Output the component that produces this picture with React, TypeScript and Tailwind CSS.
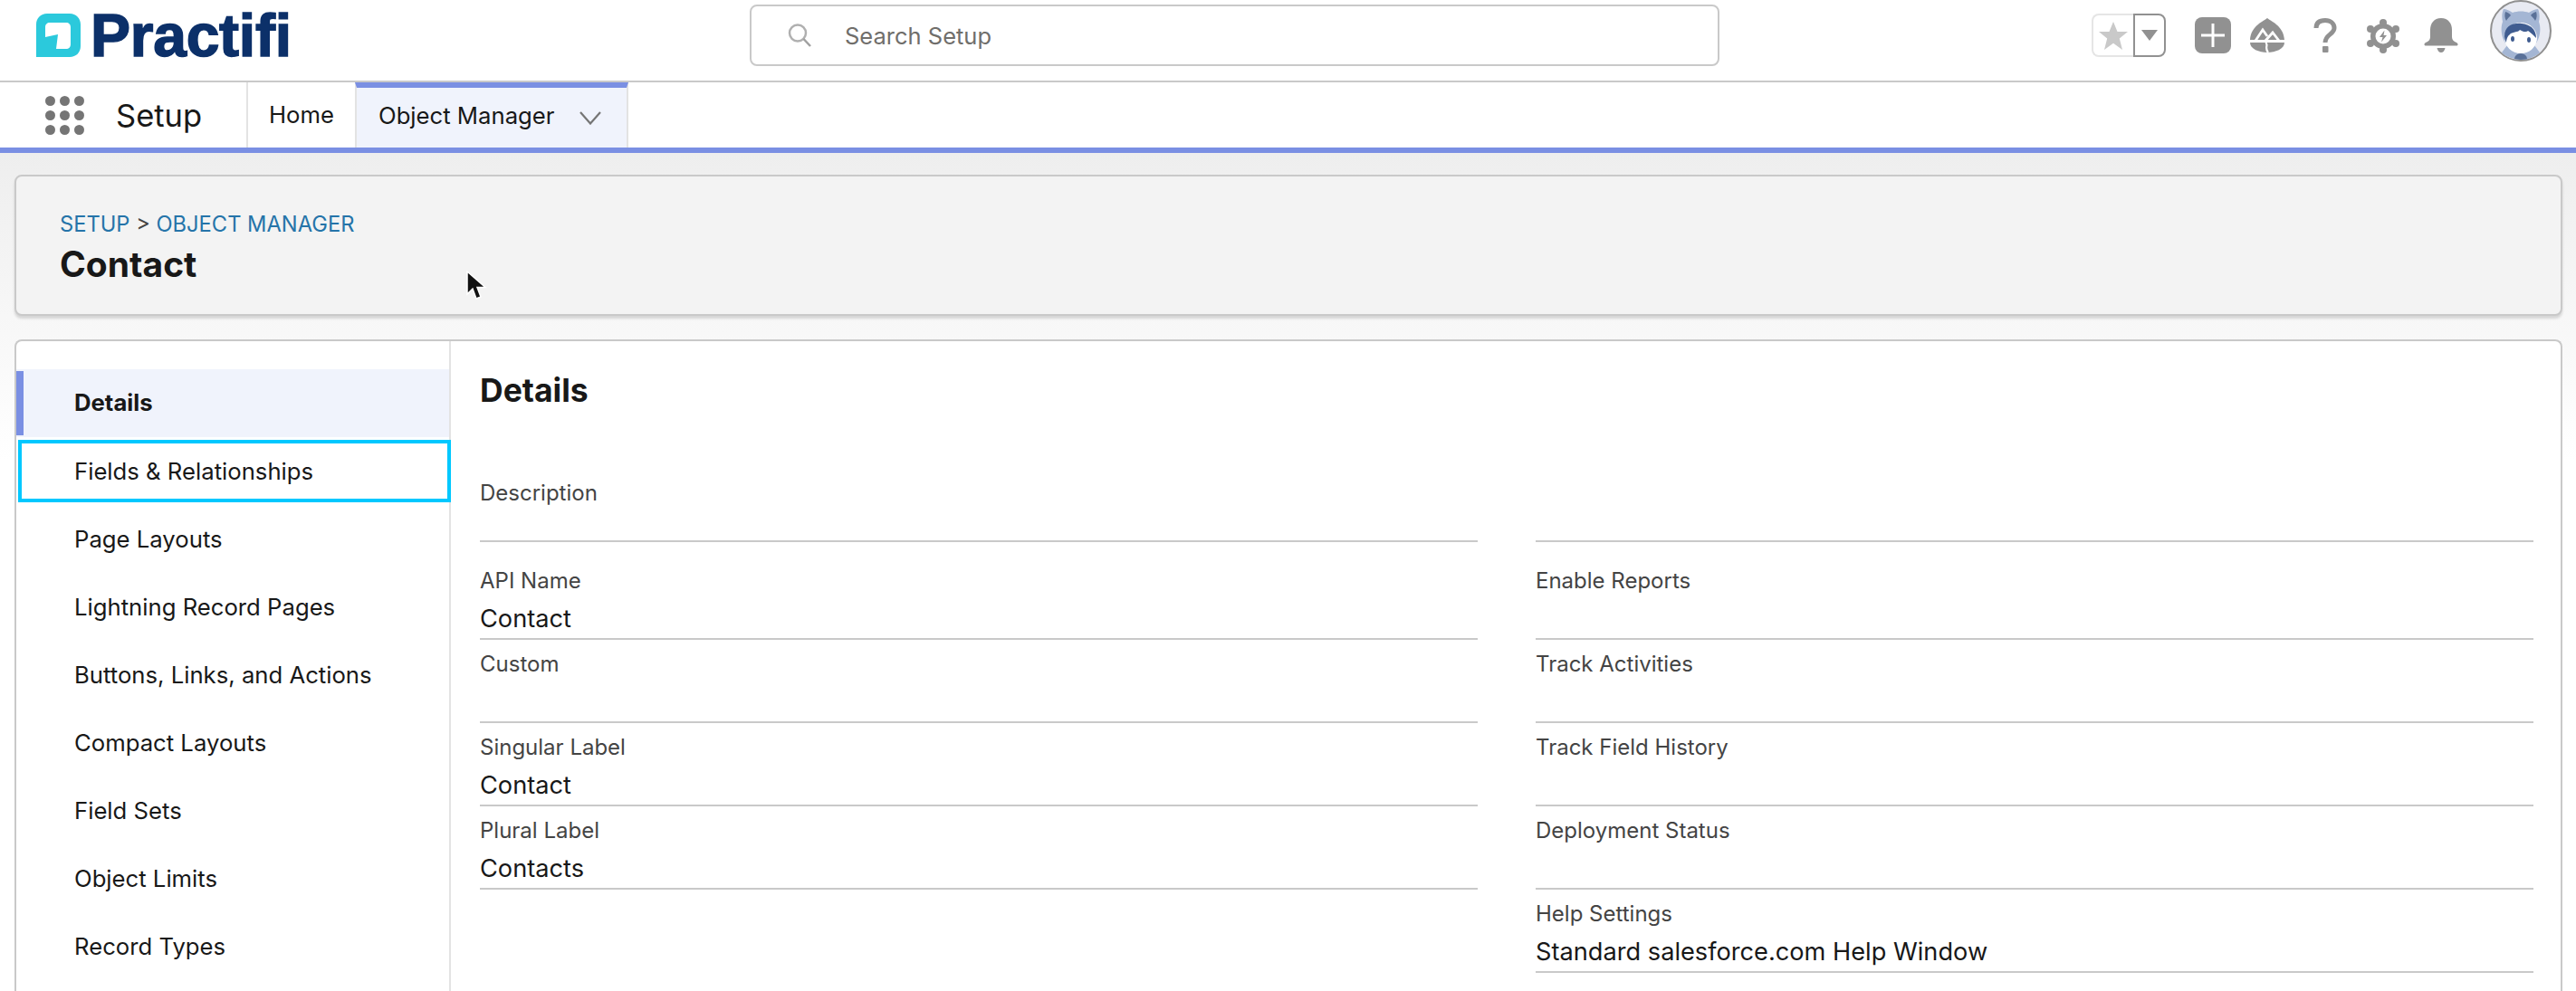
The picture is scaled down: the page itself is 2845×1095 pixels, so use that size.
const navItems = [
  "Details",
  "Fields & Relationships",
  "Page Layouts",
  "Lightning Record Pages",
  "Buttons, Links, and Actions",
  "Compact Layouts",
  "Field Sets",
  "Object Limits",
  "Record Types",
];

const leftFields = [
  { label: "API Name", value: "Contact" },
  { label: "Custom", value: "" },
  { label: "Singular Label", value: "Contact" },
  { label: "Plural Label", value: "Contacts" },
];

const rightFields = [
  { label: "Enable Reports", value: "" },
  { label: "Track Activities", value: "" },
  { label: "Track Field History", value: "" },
  { label: "Deployment Status", value: "" },
  { label: "Help Settings", value: "Standard salesforce.com Help Window" },
];

function LogoMark() {
  return (
    <svg width="49" height="48" viewBox="0 0 49 48" className="shrink-0">
      <path
        fillRule="evenodd"
        fill="#2bc9dc"
        d="M12 0H37C44 0 49 5 49 12V36C49 43 44 48 37 48H0V12C0 5 5 0 12 0ZM15 10C12 10 10 12 10 15V26L24 23L22 39H33C36 39 38 37 38 34V15C38 12 36 10 33 10Z"
      />
    </svg>
  );
}

function Trailhead() {
  return (
    <svg width="38" height="38" viewBox="0 0 38 38">
      <path fill="#919191" d="M19 0C22 3 37 8 38 24H0C1 8 16 3 19 0Z" />
      <path fill="#919191" d="M0 27H38C38 34 28 38 19 38C10 38 0 34 0 27Z" />
      <path
        fill="none"
        stroke="#fff"
        strokeWidth="2.800"
        d="M6 25L14 13L19 20M17 25L25 16L32 25"
      />
      <path fill="none" stroke="#fff" strokeWidth="2.200" d="M16 25C22 29 15 32 20 38" />
    </svg>
  );
}

function Gear() {
  return (
    <svg width="36" height="38" viewBox="0 0 36 38">
      <g fill="#919191">
        <circle cx="18" cy="19" r="14" />
        <circle cx="18" cy="4" r="4" />
        <circle cx="18" cy="34" r="4" />
        <circle cx="4" cy="11" r="4" />
        <circle cx="32" cy="11" r="4" />
        <circle cx="4" cy="27" r="4" />
        <circle cx="32" cy="27" r="4" />
      </g>
      <circle cx="18" cy="19" r="8.500" fill="#fff" />
      <path fill="#919191" d="M19.500 12.500L14 20H17.500L16 25.500L22 18H18.500Z" />
    </svg>
  );
}

function Bell() {
  return (
    <svg width="38" height="38" viewBox="0 0 38 38">
      <path
        fill="#919191"
        d="M19 0C27 0 31 6 31 13V21C31 24 33 26 36 27C38 28 38 30.500 36 30.500H2C0 30.500 0 28 2 27C5 26 7 24 7 21V13C7 6 11 0 19 0Z"
      />
      <path fill="#919191" d="M14.500 33H23.500C23 36 21 38 19 38C17 38 15 36 14.500 33Z" />
    </svg>
  );
}

function Avatar() {
  return (
    <div className="h-[68px] w-[68px] overflow-hidden rounded-full border-2 border-[#909090] bg-[#e8eaf2]">
      <svg width="64" height="64" viewBox="0 0 64 64">
        <path fill="#a4b6d4" d="M13 8C16 8 20 10 23 12C28 10 36 10 41 12C44 10 48 8 51 8C53 12 53 18 52 22C55 30 53 42 47 48L56 60L48 66H16L8 60L17 48C11 42 9 30 12 22C11 18 11 12 13 8Z" />
        <path fill="#5a7198" d="M15 11C18 12 20 13 21 15C19 17 17 19 16 21C14 18 14 14 15 11Z" />
        <path fill="#5a7198" d="M49 11C46 12 44 13 43 15C45 17 47 19 48 21C50 18 50 14 49 11Z" />
        <ellipse cx="32" cy="40" rx="18" ry="17" fill="#fff" />
        <path fill="#3f5c90" d="M14 38C14 27 23 23 33 24C43 25 49 31 49 40C46 37 43 34 40 32C38 34 34 33 31 31C29 34 22 33 20 36C17 38 16 42 16 45C15 43 14 41 14 38Z" />
        <ellipse cx="23" cy="41" rx="2" ry="3" fill="#3f5c90" />
        <ellipse cx="41" cy="42" rx="2" ry="3" fill="#3f5c90" />
        <ellipse cx="32" cy="63" rx="7" ry="6" fill="#5a7198" />
      </svg>
    </div>
  );
}

function TopBar() {
  return (
    <header className="flex h-[91px] shrink-0 border-b-2 border-[#c9c9c9] bg-white pl-[40px] pr-[27px]">
      <div className="flex w-[788px] items-start gap-[11px] pt-[15px]">
        <LogoMark />
        <span className="font-['Liberation_Sans',sans-serif] text-[66px] font-bold leading-[48px] tracking-[-0.25px] text-[#0c3069] [-webkit-text-stroke:1.5px_#0c3069]">
          Practifi
        </span>
      </div>
      <div className="mt-[5px] flex h-[68px] w-[1071px] items-center rounded-lg border-2 border-[#c9c9c9] pl-[40px]">
        <svg width="27" height="26" viewBox="0 0 27 26" fill="none" stroke="#b0b0b0" strokeWidth="2.500">
          <circle cx="11" cy="10.500" r="9" />
          <path d="M17.500 17L25 25" stroke="#a0a0a0" />
        </svg>
        <span className="ml-[36px] pt-[3px] text-[25.5px] text-[#706e6b]">Search Setup</span>
      </div>
      <div className="ml-auto flex items-start">
        <div className="mt-[15px] flex h-[48px]">
          <div className="flex w-[46px] items-center justify-center rounded-l-lg border-2 border-r-0 border-[#e5e5e5]">
            <svg width="32" height="31" viewBox="0 0 32 31">
              <path fill="#c9c9c9" d="M16 0L20.500 11H32L22.800 18.500L26 31L16 23.800L6 31L9.200 18.500L0 11H11.500Z" />
            </svg>
          </div>
          <div className="flex w-[36px] items-center justify-center rounded-r-lg border-2 border-[#919191]">
            <svg width="18" height="12" viewBox="0 0 18 12">
              <path fill="#919191" d="M0 0H18L9 12Z" />
            </svg>
          </div>
        </div>
        <div className="ml-[32px] mt-[19px] flex h-[40px] w-[40px] items-center justify-center rounded-lg bg-[#919191]">
          <svg width="28" height="28" viewBox="0 0 28 28">
            <path fill="#fff" d="M12.500 1H15.500V12.500H27V15.500H15.500V27H12.500V15.500H1V12.500H12.500Z" />
          </svg>
        </div>
        <div className="ml-[21px] mt-[20px]">
          <Trailhead />
        </div>
        <div className="ml-[32px] mt-[20px]">
          <svg width="26" height="38" viewBox="0 0 26 38">
            <path
              fill="none"
              stroke="#919191"
              strokeWidth="5"
              d="M3 11C3 5 7 2.500 13 2.500C19 2.500 23 6 23 11C23 18 13 18 13 27"
            />
            <rect x="10" y="31" width="6.500" height="7" rx="1" fill="#919191" />
          </svg>
        </div>
        <div className="ml-[33px] mt-[21px]">
          <Gear />
        </div>
        <div className="ml-[27px] mt-[20px]">
          <Bell />
        </div>
        <div className="ml-[35px]">
          <Avatar />
        </div>
      </div>
    </header>
  );
}

function AppNav() {
  return (
    <nav className="flex h-[78px] shrink-0 border-b-[6px] border-[#7a8fe3] bg-white">
      <div className="flex w-[272px] items-center pl-[50px]">
        <div className="grid grid-cols-3 gap-[5px]">
          {Array.from({ length: 9 }).map((_, i) => (
            <span key={i} className="h-[11px] w-[11px] rounded-full bg-[#757575]" />
          ))}
        </div>
        <span className="ml-[35px] pt-[2px] text-[34.5px] text-[#181818]">Setup</span>
      </div>
      <div className="flex w-[120px] items-center border-l-2 border-[#e3e3e3] pt-[1px] pl-[23px] text-[25.7px] text-[#181818]">
        Home
      </div>
      <div className="flex w-[302px] items-center border-x-2 border-t-[6px] border-[#e3e3e3] border-t-[#7a8fe3] bg-[#f0f3fc] pb-[4px] pl-[24px] text-[25.7px] text-[#181818]">
        Object Manager
        <svg width="24" height="15" viewBox="0 0 24 15" fill="none" stroke="#757575" strokeWidth="2.200" className="ml-[27px] mt-[5px]">
          <path d="M1 1L12 13.500L23 1" />
        </svg>
      </div>
    </nav>
  );
}

function Field({ label, value }: { label: string; value: string }) {
  return (
    <div className="flex h-[92px] flex-col border-b-2 border-[#c9c9c9] pt-[13px]">
      <div className="h-[28px] text-[24px] leading-[28px] text-[#444444]">{label}</div>
      <div className="mt-[10px] text-[27.2px] leading-[36px] text-[#181818]">{value}</div>
    </div>
  );
}

function Sidebar() {
  return (
    <ul className="w-[480px] shrink-0 border-r-2 border-[#e3e3e3] pt-[31px] text-[25.7px] text-[#181818]">
      {navItems.map((item, i) => {
        if (i === 0) {
          return (
            <li key={item} className="flex h-[75px] items-center bg-[#f0f3fc] py-[2px] font-bold">
              <span className="h-full w-[8px] bg-[#7a8fe3]" />
              <span className="ml-[56px]">{item}</span>
            </li>
          );
        }
        if (i === 1) {
          return (
            <li key={item} className="my-[3px] ml-[2px] -mr-[2px] flex h-[69px] items-center border-[4px] border-[#00c8ff] pl-[58px] pt-[2px]">
              {item}
            </li>
          );
        }
        return (
          <li key={item} className="flex h-[75px] items-center pl-[64px] pt-[1px]">
            {item}
          </li>
        );
      })}
    </ul>
  );
}

export default function App() {
  return (
    <div className="relative flex h-[1095px] flex-col overflow-hidden bg-white font-['Inter',sans-serif]">
      <TopBar />
      <AppNav />
      <main className="flex-1 bg-gradient-to-b from-[#eeeeee] to-white to-[340px] pl-[16px] pr-[15px] pt-[24px]">
        <section className="h-[156px] rounded-lg border-2 border-[#c9c9c9] bg-[#f3f3f3] pl-[48px] pt-[36px] shadow-[0_3px_3px_rgba(0,0,0,0.14)]">
          <div className="text-[23.7px] leading-[34px] text-[#444444]">
            <span className="text-[#2574a9]">SETUP</span> &gt; <span className="text-[#2574a9]">OBJECT MANAGER</span>
          </div>
          <h1 className="mt-[4px] text-[39px] font-bold leading-[46px] text-[#181818]">Contact</h1>
        </section>
        <section className="mt-[26px] flex h-[760px] rounded-t-lg border-2 border-b-0 border-[#c9c9c9] bg-white">
          <Sidebar />
          <div className="flex-1 pl-[32px] pr-[30px] pt-[33px]">
            <h2 className="text-[35.5px] font-bold leading-[44px] text-[#181818]">Details</h2>
            <div className="mt-[54px] flex justify-between">
              <div className="w-[1102px]">
                <div className="h-[91px] border-b-2 border-[#c9c9c9] pt-[23px] text-[24px] leading-[28px] text-[#444444]">
                  Description
                </div>
                <div className="pt-[16px]">
                  {leftFields.map((f) => (
                    <Field key={f.label} label={f.label} value={f.value} />
                  ))}
                </div>
              </div>
              <div className="w-[1102px]">
                <div className="h-[91px] border-b-2 border-[#c9c9c9]" />
                <div className="pt-[16px]">
                  {rightFields.map((f) => (
                    <Field key={f.label} label={f.label} value={f.value} />
                  ))}
                </div>
              </div>
            </div>
          </div>
        </section>
      </main>
      <svg width="24" height="34" viewBox="0 0 24 34" className="absolute left-[514px] top-[299px]">
        <path fill="#111" stroke="#fff" strokeWidth="1.500" d="M2 1V26L8 20L12 31L17 29L13 18.500H22Z" />
      </svg>
    </div>
  );
}
